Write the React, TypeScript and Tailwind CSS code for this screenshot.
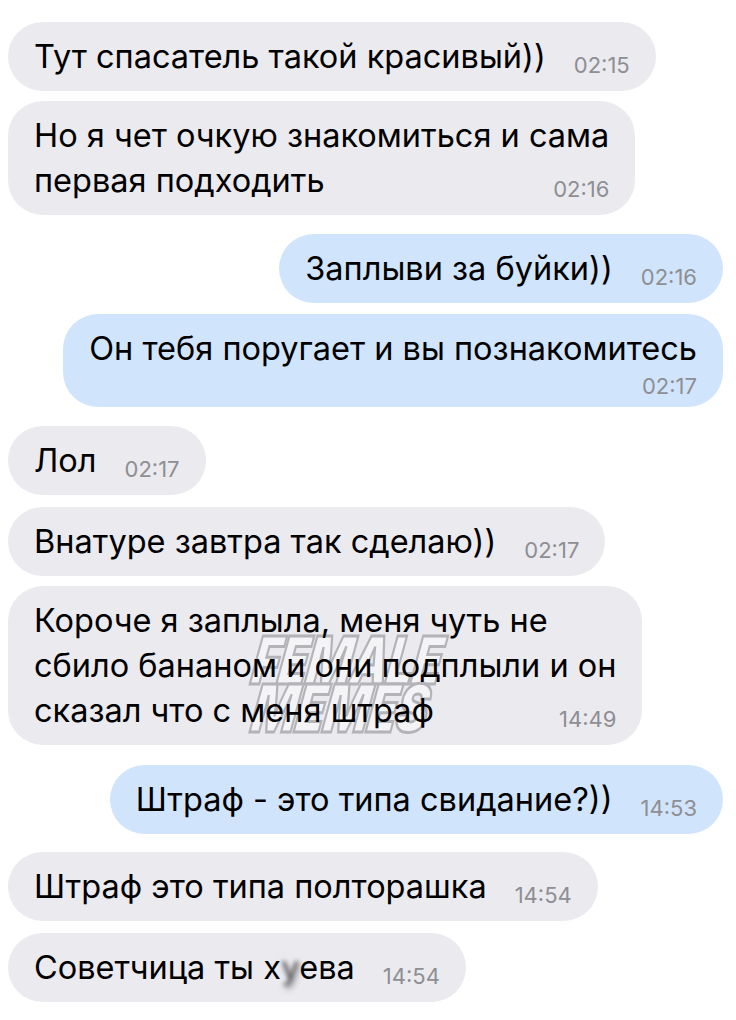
import React from "react";

type Msg = {
  id: number;
  out?: boolean;
  lines: React.ReactNode[];
  time: string;
  timeBelow?: boolean;
  mark?: boolean;
  gap: string;
};

const messages: Msg[] = [
  { id: 1, lines: ["Тут спасатель такой красивый))"], time: "02:15", gap: "mt-[22px]" },
  {
    id: 2,
    lines: ["Но я чет очкую знакомиться и сама", "первая подходить"],
    time: "02:16",
    gap: "mt-[10px]",
  },
  { id: 3, out: true, lines: ["Заплыви за буйки))"], time: "02:16", gap: "mt-[19px]" },
  {
    id: 4,
    out: true,
    lines: ["Он тебя поругает и вы познакомитесь"],
    time: "02:17",
    timeBelow: true,
    gap: "mt-[11px]",
  },
  { id: 5, lines: ["Лол"], time: "02:17", gap: "mt-[19px]" },
  { id: 6, lines: ["Внатуре завтра так сделаю))"], time: "02:17", gap: "mt-[12px]" },
  {
    id: 7,
    lines: [
      "Короче я заплыла, меня чуть не",
      "сбило бананом и они подплыли и он",
      "сказал что с меня штраф",
    ],
    time: "14:49",
    mark: true,
    gap: "mt-[10px]",
  },
  { id: 8, out: true, lines: ["Штраф - это типа свидание?))"], time: "14:53", gap: "mt-[20px]" },
  { id: 9, lines: ["Штраф это типа полторашка"], time: "14:54", gap: "mt-[18px]" },
  {
    id: 10,
    lines: [
      <>
        Советчица ты х
        <span className="inline-block blur-[2px] text-[#5f5f64] [text-shadow:2px_3px_4px_#777]">у</span>
        ева
      </>,
    ],
    time: "14:54",
    gap: "mt-[12px]",
  },
];

function Time({ children }: { children: string }) {
  return (
    <span className="shrink-0 translate-y-[8px] text-[22px] leading-none text-[#8e8e93]">
      {children}
    </span>
  );
}

function Watermark() {
  return (
    <div className="pointer-events-none absolute top-[50px] left-[226px] flex w-[220px] -skew-x-12 scale-x-[0.72] flex-col items-center text-[66px] leading-[48px] font-black tracking-[-2px] text-[#f4f4f6] italic [-webkit-text-stroke:3px_#b3b3b8]">
      <span>FEMALE</span>
      <span>MEMES</span>
    </div>
  );
}

function Bubble({ msg }: { msg: Msg }) {
  const last = msg.lines.length - 1;
  return (
    <div className={`flex ${msg.out ? "justify-end" : "justify-start"} ${msg.gap}`}>
      <div
        className={`relative rounded-[35px] py-[12px] pr-[26px] pl-[26px] text-[32.5px] leading-[45px] text-black ${
          msg.out ? "bg-[#d0e4fb]" : "bg-[#eaeaef]"
        }`}
      >
        {msg.mark && <Watermark />}
        <div className="relative">
          {msg.lines.map((line, i) =>
            i === last && !msg.timeBelow ? (
              <div key={i} className="flex items-center">
                <span className="whitespace-nowrap">{line}</span>
                <span className="min-w-[28px] flex-1" />
                <Time>{msg.time}</Time>
              </div>
            ) : (
              <div key={i} className="whitespace-nowrap">
                {line}
              </div>
            ),
          )}
          {msg.timeBelow && (
            <div className="-mt-[4px] flex h-[28px] justify-end">
              <Time>{msg.time}</Time>
            </div>
          )}
        </div>
      </div>
    </div>
  );
}

export default function App() {
  return (
    <div className="min-h-[1020px] w-[736px] bg-white pr-[13px] pl-[8px] font-['Inter','Liberation_Sans',sans-serif]">
      {messages.map((m) => (
        <Bubble key={m.id} msg={m} />
      ))}
    </div>
  );
}
